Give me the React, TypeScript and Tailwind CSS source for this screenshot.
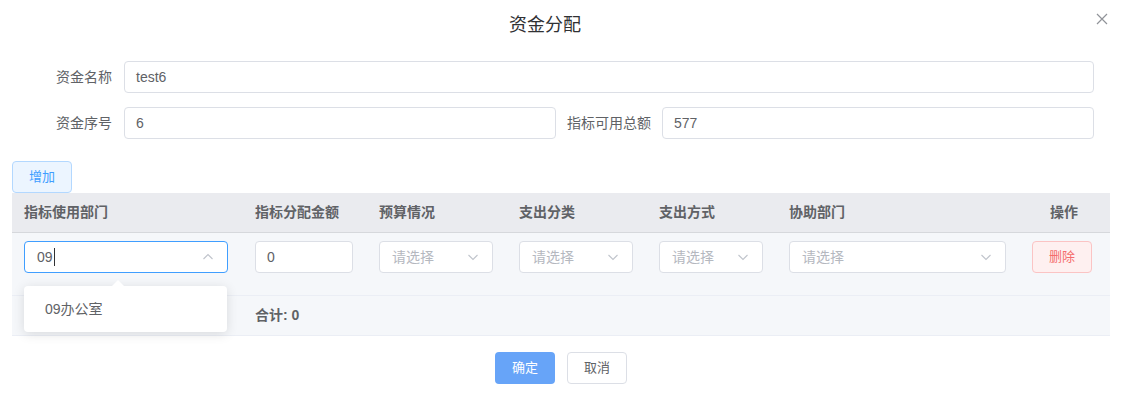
import React from "react";

const font = { fontFamily: "'Liberation Sans', 'Noto Sans CJK SC', sans-serif" };

function Chevron({ up = false }: { up?: boolean }) {
  return (
    <svg width="12" height="12" viewBox="0 0 12 12" className="shrink-0">
      <path
        d={up ? "M1.5 8 L6 3.5 L10.5 8" : "M1.5 4 L6 8.5 L10.5 4"}
        fill="none"
        stroke="#c0c4cc"
        strokeWidth="1.1"
      />
    </svg>
  );
}

function Select({ w, placeholder = "请选择" }: { w: string; placeholder?: string }) {
  return (
    <div className={`${w} h-[32px] flex items-center justify-between pl-[12px] pr-[13px] bg-white border border-[#dcdfe6] rounded-[4px]`}>
      <span className="text-[14px] text-[#b5b8bf]">{placeholder}</span>
      <Chevron />
    </div>
  );
}

export default function App() {
  return (
    <div className="relative w-[1122px] h-[397px] bg-white text-[#606266]" style={font}>
      {/* header */}
      <div className="h-[50px] pt-[13px] pr-[32px] text-center text-[18px] leading-[24px] text-[#303133]">资金分配</div>
      <div className="absolute right-[14px] top-[13px]">
        <svg width="12" height="12" viewBox="0 0 12 12">
          <path d="M1 1 L11 11 M11 1 L1 11" stroke="#909399" strokeWidth="1.2" />
        </svg>
      </div>

      {/* form */}
      <div className="pl-[24px] pr-[28px] pt-[11px]">
        <div className="flex items-center h-[32px]">
          <div className="w-[100px] pr-[12px] text-right text-[14px]">资金名称</div>
          <div className="flex-1 h-[32px] flex items-center px-[11px] border border-[#dcdfe6] rounded-[4px] text-[14px]">test6</div>
        </div>
        <div className="flex items-center h-[32px] mt-[14px]">
          <div className="w-[100px] pr-[12px] text-right text-[14px]">资金序号</div>
          <div className="w-[432px] h-[32px] flex items-center px-[11px] border border-[#dcdfe6] rounded-[4px] text-[14px]">6</div>
          <div className="w-[106px] pr-[11px] text-right text-[14px] whitespace-nowrap">指标可用总额</div>
          <div className="flex-1 h-[32px] flex items-center px-[11px] border border-[#dcdfe6] rounded-[4px] text-[14px]">577</div>
        </div>
      </div>

      {/* add button + table */}
      <div className="px-[12px] mt-[22px]">
        <div className="w-[60px] h-[32px] flex items-center justify-center bg-[#ecf5ff] border border-[#b3d8ff] rounded-[4px] text-[13px] text-[#409eff]">增加</div>

        <div className="relative">
          <div className="flex h-[40px] items-center bg-[#eaebef] border-b border-[#d6d8dc] text-[14px] font-bold text-[#606266]">
            <div className="w-[231px] px-[12px]">指标使用部门</div>
            <div className="w-[124px] px-[12px]">指标分配金额</div>
            <div className="w-[140px] px-[12px]">预算情况</div>
            <div className="w-[140px] px-[12px]">支出分类</div>
            <div className="w-[130px] px-[12px]">支出方式</div>
            <div className="w-[241px] px-[12px]">协助部门</div>
            <div className="w-[92px] text-center">操作</div>
          </div>

          <div className="flex h-[63px] pt-[8px] bg-[#f5f7fa] border-b border-[#ebeef5]">
            <div className="w-[231px] px-[12px]">
              <div className="w-[204px] h-[32px] flex items-center justify-between pl-[12px] pr-[13px] bg-white border border-[#409eff] rounded-[4px]">
                <span className="flex items-center text-[14px] text-[#606266]">
                  09<span className="inline-block w-[1px] h-[18px] bg-[#303133] ml-[1px]"></span>
                </span>
                <Chevron up />
              </div>
            </div>
            <div className="w-[124px] px-[12px]">
              <div className="w-[98px] h-[32px] flex items-center px-[11px] bg-white border border-[#dcdfe6] rounded-[4px] text-[14px]">0</div>
            </div>
            <div className="w-[140px] px-[12px]"><Select w="w-[114px]" /></div>
            <div className="w-[140px] px-[12px]"><Select w="w-[114px]" /></div>
            <div className="w-[130px] px-[12px]"><Select w="w-[104px]" /></div>
            <div className="w-[241px] px-[12px]"><Select w="w-[217px]" /></div>
            <div className="w-[92px] flex justify-center">
              <div className="w-[60px] h-[32px] flex items-center justify-center bg-[#fef0f0] border border-[#fbc4c4] rounded-[4px] text-[13px] text-[#f56c6c] -ml-[4px]">删除</div>
            </div>
          </div>

          <div className="flex h-[40px] items-center bg-[#f5f7fa] border-b border-[#ebeef5]">
            <div className="w-[231px]"></div>
            <div className="px-[12px] text-[14px] font-bold text-[#606266]">合计: 0</div>
          </div>

          {/* dropdown */}
          <div className="absolute left-[12px] top-[93px] w-[203px] h-[46px] bg-white rounded-[4px] shadow-[0_2px_12px_rgba(0,0,0,0.12)] flex items-center pl-[21px] text-[14px] text-[#606266]">
            09办公室
            <div className="absolute left-[88px] -top-[6px] w-0 h-0 border-l-[6px] border-r-[6px] border-b-[6px] border-l-transparent border-r-transparent border-b-white"></div>
          </div>
        </div>
      </div>

      {/* footer */}
      <div className="flex justify-center gap-[12px] mt-[16px]">
        <div className="w-[60px] h-[32px] flex items-center justify-center bg-[#67a4f8] rounded-[4px] text-[13px] text-white">确定</div>
        <div className="w-[60px] h-[32px] flex items-center justify-center bg-white border border-[#dcdfe6] rounded-[4px] text-[13px] text-[#606266]">取消</div>
      </div>
    </div>
  );
}
